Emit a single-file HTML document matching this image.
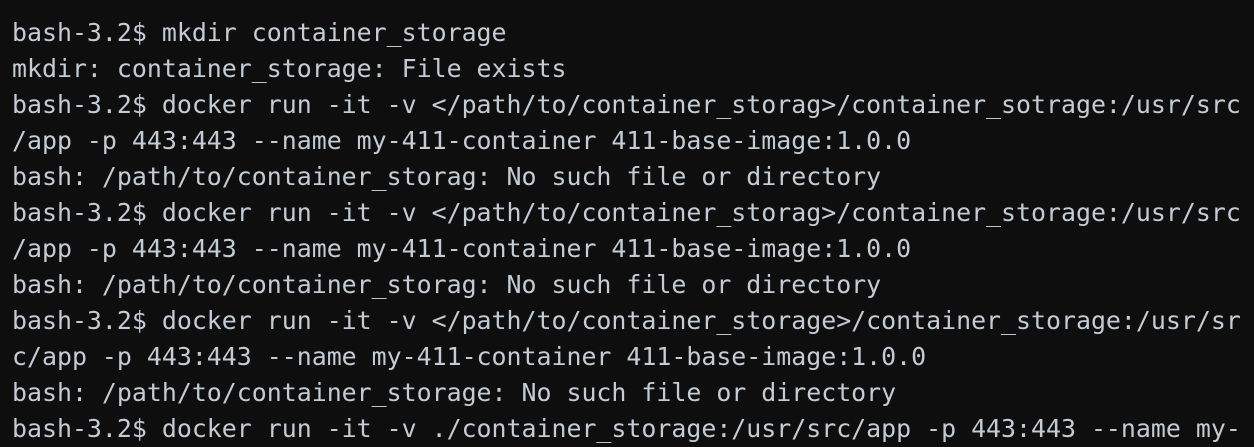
<!DOCTYPE html>
<html><head><style>
html,body{margin:0;padding:0;background:#0e0e0e;width:1254px;height:446px;overflow:hidden}
pre{margin:0;position:absolute;left:12px;top:15px;font-family:"DejaVu Sans Mono","Liberation Mono",monospace;font-size:24.9px;line-height:36px;color:#c3cbd5;white-space:pre;overflow:visible}
</style></head><body>
<pre>bash-3.2$ mkdir container_storage
mkdir: container_storage: File exists
bash-3.2$ docker run -it -v &lt;/path/to/container_storag&gt;/container_sotrage:/usr/src
/app -p 443:443 --name my-411-container 411-base-image:1.0.0
bash: /path/to/container_storag: No such file or directory
bash-3.2$ docker run -it -v &lt;/path/to/container_storag&gt;/container_storage:/usr/src
/app -p 443:443 --name my-411-container 411-base-image:1.0.0
bash: /path/to/container_storag: No such file or directory
bash-3.2$ docker run -it -v &lt;/path/to/container_storage&gt;/container_storage:/usr/sr
c/app -p 443:443 --name my-411-container 411-base-image:1.0.0
bash: /path/to/container_storage: No such file or directory
bash-3.2$ docker run -it -v ./container_storage:/usr/src/app -p 443:443 --name my-</pre>
</body></html>
